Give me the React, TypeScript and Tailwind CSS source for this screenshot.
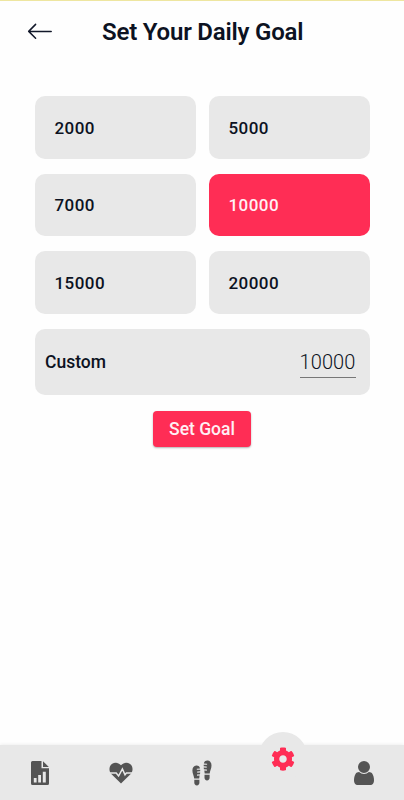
import { useState } from 'react';
import { FaCog } from 'react-icons/fa';

const GOALS = [2000, 5000, 7000, 10000, 15000, 20000];

function BackArrow() {
    return (
        <svg width="26" height="18" viewBox="0 0 26 18" fill="none" stroke="#12182a" strokeWidth="1.5">
            <path d="M24.2 9.4H1.7M8.6 2.4L1.7 9.4L8.6 16.2" strokeLinecap="round" strokeLinejoin="round" />
        </svg>
    );
}

function ReportIcon() {
    return (
        <svg width="18" height="24" viewBox="0 0 18 24" fill="currentColor">
            <path
                fillRule="evenodd"
                d="M1.5 0H10.5V7.2H18V22.5Q18 24 16.5 24H1.5Q0 24 0 22.5V1.5Q0 0 1.5 0ZM2.8 17V21.6H5.6V17ZM7.2 14V21.6H10V14ZM11.8 10.8V21.6H14.8V10.8Z"
            />
            <path d="M12 0.2L17.8 6H12Z" />
        </svg>
    );
}

function HeartIcon() {
    return (
        <svg width="24" height="22" viewBox="0 0 24 22">
            <path
                d="M12 21.5L2.3 12C-0.2 9.4 0 5.2 2 2.8C4.6-0.2 9.2 0 12 3.2C14.8 0 19.4-0.2 22 2.8C24 5.2 24.2 9.4 21.7 12Z"
                fill="currentColor"
            />
            <path d="M0 11H7.2L9.6 14L13.4 7L16 12.8L17.4 11H24" fill="none" stroke="#e8e8e8" strokeWidth="1.5" />
        </svg>
    );
}

function StepsIcon() {
    return (
        <svg width="20" height="26" viewBox="0 0 20 26" fill="currentColor">
            <path d="M4.2 5.4C6.5 5.3 7.8 6.6 8 8.4L4.8 8.7V9.8L8.2 9.7V11.3L5.2 11.6V12.7L8.2 12.6L8 14.2L5 14.6V15.7L7.6 15.6L7.2 18.4H2.2C1.9 15.5 0.4 13.7 0.4 10.5C0.4 7.5 1.9 5.5 4.2 5.4Z" />
            <path d="M2.3 19.8H7.4V22.6C7.4 24.5 6.5 25.4 4.9 25.4C3.2 25.4 2.3 24.5 2.3 22.6Z" />
            <path d="M15.7 0.4C13.4 0.3 12.1 1.6 11.9 3.4L15.1 3.7V4.8L11.7 4.7V6.3L14.7 6.6V7.7L11.7 7.6L11.9 9.2L14.9 9.6V10.7L12.3 10.6L12.7 13.4H17.7C18 10.5 19.5 8.7 19.5 5.5C19.5 2.5 18 0.5 15.7 0.4Z" />
            <path d="M17.6 14.8H12.5V17.6C12.5 19.5 13.4 20.4 15 20.4C16.7 20.4 17.6 19.5 17.6 17.6Z" />
        </svg>
    );
}

function ProfileIcon() {
    return (
        <svg width="20" height="24" viewBox="256 128 1280 1536" fill="currentColor">
            <path d="M1536 1399q0 109-62.5 187t-150.5 78h-854q-88 0-150.5-78t-62.5-187q0-85 8.5-160.5t31.5-152 58.5-131 94-89 134.5-34.5q131 128 313 128t313-128q76 0 134.5 34.5t94 89 58.5 131 31.5 152 8.5 160.5zm-256-887q0 159-112.5 271.5t-271.5 112.5-271.5-112.5-112.5-271.5 112.5-271.5 271.5-112.5 271.5 112.5 112.5 271.5z" />
        </svg>
    );
}

function BottomNav() {
    return (
        <nav className="relative h-[55px] bg-[#e8e8e8] shadow-[0_-1px_3px_rgba(0,0,0,0.06)]">
            {/* Raised bump behind the active tab */}
            <div className="absolute left-[259px] -top-[13px] w-12 h-12 rounded-full bg-[#e8e8e8]" />
            <div className="relative grid grid-cols-[repeat(5,81px)] -ml-px h-full justify-items-center items-center text-[#545454]">
                <button aria-label="Report">
                    <ReportIcon />
                </button>
                <button aria-label="Heart rate">
                    <HeartIcon />
                </button>
                <button aria-label="Steps">
                    <StepsIcon />
                </button>
                <button aria-label="Settings" className="mb-[27px] text-[#ff2d55]">
                    <FaCog size={24} />
                </button>
                <button aria-label="Profile">
                    <ProfileIcon />
                </button>
            </div>
        </nav>
    );
}

export default function App() {
    const [goal, setGoal] = useState(10000);

    return (
        <div className="flex flex-col w-[404px] h-[800px] overflow-hidden bg-[#fefefe] border-t border-[#eee6a0] font-[Roboto,sans-serif] text-[#0c1222]">
            {/* Header */}
            <header className="flex items-center h-[62px] pl-[27px]">
                <button aria-label="Back" className="-mt-0.5">
                    <BackArrow />
                </button>
                <h1 className="ml-[49px] text-[24px] font-semibold tracking-[-0.2px]">Set Your Daily Goal</h1>
            </header>

            <main className="flex-1 flex flex-col items-center pt-[33px] px-[34.5px]">
                {/* Goal presets */}
                <div className="grid grid-cols-2 gap-x-[13px] gap-y-[15px] w-full">
                    {GOALS.map((value) => (
                        <button
                            key={value}
                            onClick={() => setGoal(value)}
                            className={`h-[62.5px] pl-5 pt-0.5 rounded-[10px] text-left text-[17px] font-medium tracking-[0.45px] ${
                                value === goal ? 'bg-[#ff2d55] text-[#fff0f4]' : 'bg-[#e8e8e8]'
                            }`}
                        >
                            {value}
                        </button>
                    ))}
                </div>

                {/* Custom goal */}
                <div className="flex items-center justify-between w-full h-[66.5px] mt-[15px] pl-[10.5px] pr-[14px] rounded-[10px] bg-[#e8e8e8]">
                    <span className="pt-px text-[17.5px] font-medium">Custom</span>
                    <span className="mt-[3px] border-b border-[#777] pb-px text-[20px] font-light leading-[27px] tracking-[0.1px]">
                        {goal}
                    </span>
                </div>

                <button className="mt-[15.5px] pt-px w-[98px] h-[36px] rounded-[4px] bg-[#ff2d55] text-[#fff0f4] text-[17.5px] font-medium shadow-[0_1px_2px_rgba(0,0,0,0.3)]">
                    Set Goal
                </button>
            </main>

            <BottomNav />
        </div>
    );
}
